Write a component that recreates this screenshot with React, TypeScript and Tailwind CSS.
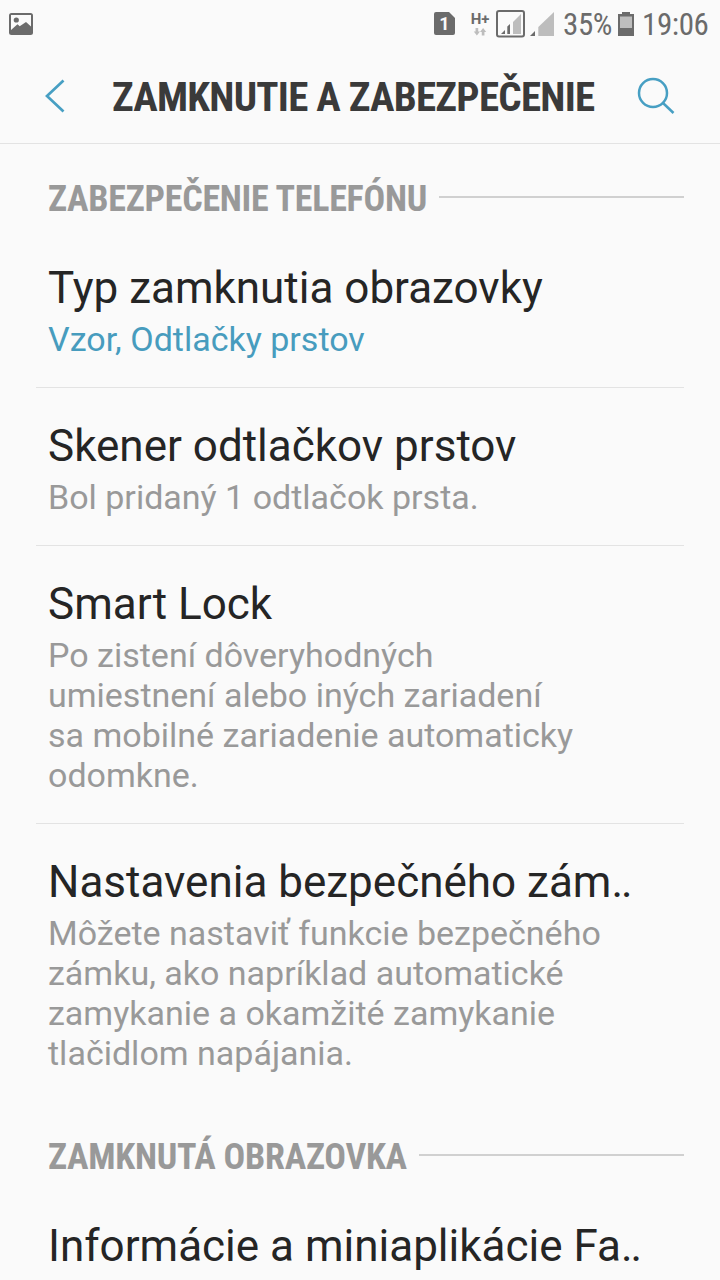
import React from 'react';

type Item = {
  title: string;
  lines: string[];
  active?: boolean;
  truncated?: boolean;
};

const securityItems: Item[] = [
  { title: 'Typ zamknutia obrazovky', lines: ['Vzor, Odtlačky prstov'], active: true },
  { title: 'Skener odtlačkov prstov', lines: ['Bol pridaný 1 odtlačok prsta.'] },
  {
    title: 'Smart Lock',
    lines: ['Po zistení dôveryhodných', 'umiestnení alebo iných zariadení', 'sa mobilné zariadenie automaticky', 'odomkne.'],
  },
  {
    title: 'Nastavenia bezpečného zám',
    lines: ['Môžete nastaviť funkcie bezpečného', 'zámku, ako napríklad automatické', 'zamykanie a okamžité zamykanie', 'tlačidlom napájania.'],
    truncated: true,
  },
];

function StatusBar() {
  return (
    <div className="flex h-12 items-center pl-[9px] pr-[11px] text-[#6b6b6b]">
      <svg width="24" height="22" viewBox="0 0 24 22">
        <rect x="0" y="0" width="24" height="22" rx="2.5" fill="#6b6b6b" />
        <path d="M2 2h20v11.5L17 9l-6.300 4.300L8.500 11.300 2 17z" fill="#fafafa" />
        <circle cx="7.300" cy="7" r="2.600" fill="#6b6b6b" />
      </svg>
      <div className="relative ml-auto flex h-6 w-[21px] items-center justify-center">
        <svg width="21" height="24" className="absolute inset-0">
          <path d="M2 0h13l6 6v15a2 2 0 0 1-2 2H2a2 2 0 0 1-2-2V2a2 2 0 0 1 2-2z" fill="#6b6b6b" />
        </svg>
        <span className="relative text-[18px] font-bold leading-none text-[#fafafa]">1</span>
      </div>
      <div className="ml-[17px] flex h-6 w-4 flex-col items-center">
        <span className="text-[15px] font-bold leading-[14px] [font-stretch:88%]">H+</span>
        <svg width="14" height="9" viewBox="0 0 14 9" fill="#bdbdbd" className="mt-0.5">
          <path d="M2 0h3v4h2L3.500 8.500 0 4h2zM9 8.500h3v-4h2L10.500 0 7 4.500h2z" />
        </svg>
      </div>
      <svg width="62" height="30" viewBox="0 0 62 30" className="ml-2">
        <rect x="1" y="2" width="27" height="25.500" rx="2" fill="none" stroke="#6b6b6b" strokeWidth="2" />
        <path d="M5 25l4-4v4zM11.300 25v-7.500l2.700-2.500v10z" fill="#6b6b6b" />
        <path d="M17 25V13l8-8v20z" fill="#bdbdbd" />
        <path d="M34 27l5-5v5z" fill="#6b6b6b" />
        <path d="M42.300 27v-9L58 3v24z" fill="#bdbdbd" />
      </svg>
      <span className="ml-[5px] w-[49px] pt-px text-[31px] leading-none tracking-[-0.4px] [font-stretch:75%]">35%</span>
      <svg width="16" height="24" viewBox="0 0 16 24" className="ml-1.5">
        <path d="M4 0h8v2h4v22H0V2h4z" fill="#6b6b6b" />
        <path d="M2 4.500h12V16H2z" fill="#bdbdbd" />
      </svg>
      <span className="ml-2 w-[67px] pt-px text-[31px] leading-none tracking-[-0.4px] [font-stretch:75%]">19:06</span>
    </div>
  );
}

function SectionHeader({ title }: { title: string }) {
  return (
    <div className="flex h-[54px] items-center gap-3 pl-12 pr-9">
      <h2 className="shrink-0 whitespace-nowrap pt-1 text-[36px] font-bold leading-[50px] tracking-[-0.25px] text-[#999] [font-stretch:75%]">
        {title}
      </h2>
      <div className="h-0.5 flex-1 bg-[#d0d0d0]" />
    </div>
  );
}

function SettingRow({ title, lines, active, truncated }: Item) {
  return (
    <div className="mx-9 border-b border-[#e3e3e3] px-3 pb-7 pt-[29px] last:border-0">
      <h3 className="whitespace-nowrap text-[44px] leading-[58px] text-[#252525]">
        {title}
        {truncated && <span className="tracking-[-2px]">..</span>}
      </h3>
      <p className={`mt-0.5 whitespace-nowrap text-[34px] leading-10 ${active ? 'text-[#479cbe]' : 'text-[#999]'}`}>
        {lines.map((line) => (
          <span key={line} className="block">{line}</span>
        ))}
      </p>
    </div>
  );
}

export default function App() {
  return (
    <div className="h-[1280px] w-[720px] overflow-hidden bg-[#fafafa] font-[Roboto,sans-serif]">
      <StatusBar />
      <header className="flex h-24 items-center border-b border-[#e3e3e3] pl-[45px] pr-[45px]">
        <svg width="20" height="34" viewBox="0 0 20 34" fill="none" stroke="#479fc3" strokeWidth="2.700">
          <path d="M18.500 1.500L2 17l16.500 15.500" />
        </svg>
        <h1 className="ml-[47px] whitespace-nowrap pt-[5px] text-[41px] font-bold tracking-[-0.74px] text-[#3a3a3a] [font-stretch:75%]">
          ZAMKNUTIE A ZABEZPEČENIE
        </h1>
        <svg width="38" height="38" viewBox="0 0 38 38" fill="none" stroke="#479fc3" strokeWidth="2.500" className="ml-auto">
          <circle cx="16" cy="16" r="14" />
          <path d="M26 26l10.500 10" />
        </svg>
      </header>
      <div className="pt-[26px]">
        <SectionHeader title="ZABEZPEČENIE TELEFÓNU" />
      </div>
      <div className="pt-1.5">
        {securityItems.map((item) => (
          <SettingRow key={item.title} {...item} />
        ))}
      </div>
      <div className="pb-1.5 pt-[27px]">
        <SectionHeader title="ZAMKNUTÁ OBRAZOVKA" />
      </div>
      <SettingRow title="Informácie a miniaplikácie Fa" lines={[]} truncated />
    </div>
  );
}
